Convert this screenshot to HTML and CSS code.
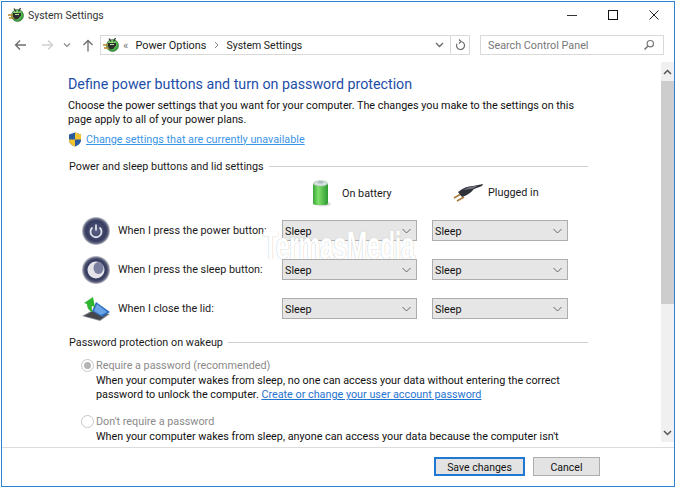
FILE: index.html
```html
<!DOCTYPE html>
<html lang="en">
<head>
<meta charset="utf-8">
<title>System Settings</title>
<link rel="stylesheet" href="styles.css">
</head>
<body>
<svg class="defs" width="0" height="0">
  <defs>
    <radialGradient id="globe" cx="0.4" cy="0.35" r="0.7"><stop offset="0" stop-color="#a8e884"/><stop offset="1" stop-color="#2a9a34"/></radialGradient>
    <linearGradient id="batt" x1="0" x2="1" y1="0" y2="0"><stop offset="0" stop-color="#3aa53a"/><stop offset="0.35" stop-color="#7fe06a"/><stop offset="1" stop-color="#2d9a33"/></linearGradient>
    <radialGradient id="knob" cx="0.5" cy="0.5" r="0.5"><stop offset="0" stop-color="#5a6088"/><stop offset="0.72" stop-color="#363b60"/><stop offset="0.86" stop-color="#595e7a"/><stop offset="1" stop-color="#c9cad0"/></radialGradient>
    <symbol id="cp" viewBox="0 0 16 16">
      <circle cx="9.500" cy="8.500" r="6" fill="url(#globe)" stroke="#2c5d2c" stroke-width=".6"/>
      <path d="M6 1.500 8 4.500M12.500 1 10.500 4.500" stroke="#333" stroke-width="1.300"/>
      <path d="M0 8h5M1 11h5" stroke="#b9862e" stroke-width="1.300"/>
      <path d="M5 6h8v2.500l-3 3.500-3 .5-2-3z" fill="#2e2e2e"/>
      <path d="M7 7.500h4" stroke="#b5e89a"/>
    </symbol>
  </defs>
</svg>
<div class="window">
  <header class="titlebar">
    <svg class="title-icon"><use href="#cp"/></svg>
    <span class="title-text">System Settings</span>
    <div class="winctrls">
      <svg width="12" height="12" viewBox="0 0 12 12"><path d="M1 6.500h10" stroke="#333" stroke-width="1"/></svg>
      <svg width="12" height="12" viewBox="0 0 12 12"><rect x="1.500" y="1.500" width="9" height="9" fill="none" stroke="#111"/></svg>
      <svg width="12" height="12" viewBox="0 0 12 12"><path d="M1.500 1.500 10.500 10.500M10.500 1.500 1.500 10.500" stroke="#222" fill="none"/></svg>
    </div>
  </header>
  <nav class="toolbar">
    <div class="navbtns">
      <svg width="13" height="12" viewBox="0 0 13 12"><path d="M12 6H1.500M6 1.500 1.500 6 6 10.500" fill="none" stroke="#6d6d6d" stroke-width="1.300"/></svg>
      <svg width="13" height="12" viewBox="0 0 13 12"><path d="M1 6h10.500M7 1.500 11.500 6 7 10.500" fill="none" stroke="#d0d0d0" stroke-width="1.300"/></svg>
      <svg width="8" height="6" viewBox="0 0 8 6"><path d="M1 1.500 4 4.500 7 1.500" fill="none" stroke="#8a8a8a" stroke-width="1.200"/></svg>
      <svg width="12" height="13" viewBox="0 0 12 13"><path d="M6 12.500V1.500M1.500 6 6 1.500 10.500 6" fill="none" stroke="#6d6d6d" stroke-width="1.300"/></svg>
    </div>
    <div class="address">
      <svg class="addr-icon"><use href="#cp"/></svg>
      <span class="crumb-sep">«</span>
      <span class="crumb crumb-first">Power Options</span>
      <svg class="crumb-arrow" width="5" height="8" viewBox="0 0 5 8"><path d="M1 1 4 4 1 7" fill="none" stroke="#888"/></svg>
      <span class="crumb">System Settings</span>
      <svg class="addr-chev" width="9" height="6" viewBox="0 0 9 6"><path d="M1 1 4.500 4.500 8 1" fill="none" stroke="#666" stroke-width="1.300"/></svg>
      <div class="refresh">
        <svg width="11" height="12" viewBox="0 0 11 12"><path d="M5.500 2.500a4 4 0 1 1-3.600 2.300M4 .5 6 2.500 4 4.500" fill="none" stroke="#6d6d6d" stroke-width="1.200"/></svg>
      </div>
    </div>
    <div class="search">
      <span>Search Control Panel</span>
      <svg width="12" height="12" viewBox="0 0 12 12"><circle cx="7.300" cy="4.700" r="3.200" fill="none" stroke="#777" stroke-width="1.200"/><path d="M5 7 1.500 10.500" stroke="#777" stroke-width="1.600"/></svg>
    </div>
  </nav>
  <div class="body">
    <main class="content">
      <h1 class="heading">Define power buttons and turn on password protection</h1>
      <p class="intro">Choose the power settings that you want for your computer. The changes you make to the settings on this page apply to all of your power plans.</p>
      <div class="change">
        <svg width="14" height="15" viewBox="0 0 14 15"><path d="M7 .5 13 2.500V8c0 3.500-3 5.500-6 6.500C4 13.500 1 11.500 1 8V2.500z" fill="#2a5a9e"/><path d="M7 .5 13 2.500V7.500H7z" fill="#f3c42f"/><path d="M7 7.500V14.500C4 13.500 1 11.500 1 8v-.5z" fill="#f3c42f"/></svg>
        <a class="link">Change settings that are currently unavailable</a>
      </div>
      <div class="group-title"><span>Power and sleep buttons and lid settings</span><i></i></div>
      <div class="col-heads">
        <div class="col-head col-battery">
          <svg width="19" height="27" viewBox="0 0 19 27"><ellipse cx="11" cy="24" rx="8" ry="2.500" fill="#ddd"/><rect x="1" y="3" width="15" height="22" rx="2.500" fill="url(#batt)"/><ellipse cx="8.500" cy="3.500" rx="7" ry="2.800" fill="#d3dfe0" stroke="#8bb08b" stroke-width=".5"/><rect x="6" y="1" width="5" height="2.500" rx="1" fill="#aebcc0"/></svg>
          <span>On battery</span>
        </div>
        <div class="col-head col-plug">
          <svg width="30" height="19" viewBox="0 0 30 19"><path d="M1 15 8 11M4 18 11 14" stroke="#a87a3a" stroke-width="1.500"/><path d="M5 9Q12 3 20 3L30 1 29 3 21 6Q16 12 9 14z" fill="#2f3238"/><path d="M10 7Q14 4 20 3.500L25 2.500 20 5.500Q15 6 10 7z" fill="#767a82"/></svg>
          <span>Plugged in</span>
        </div>
      </div>
      <div class="grid">
        <svg class="row-icon" width="30" height="30" viewBox="0 0 30 30"><circle cx="15" cy="15" r="14" fill="url(#knob)"/><path d="M11.500 11.500a5.500 5.500 0 1 0 7 0" fill="none" stroke="#dfe0e8" stroke-width="1.800"/><path d="M15 8.500v6" stroke="#dfe0e8" stroke-width="1.800"/></svg>
        <span class="row-label">When I press the power button:</span>
        <div class="dropdown"><span>Sleep</span><svg width="9" height="6" viewBox="0 0 9 6"><path d="M.5 1 4.500 5 8.500 1" fill="none" stroke="#666"/></svg></div>
        <div class="dropdown"><span>Sleep</span><svg width="9" height="6" viewBox="0 0 9 6"><path d="M.5 1 4.500 5 8.500 1" fill="none" stroke="#666"/></svg></div>

        <svg class="row-icon" width="30" height="30" viewBox="0 0 30 30"><circle cx="15" cy="15" r="14" fill="url(#knob)"/><circle cx="15" cy="15" r="8.500" fill="#e4e4ea"/><ellipse cx="17.500" cy="13" rx="5" ry="6" fill="#7c80a0"/></svg>
        <span class="row-label">When I press the sleep button:</span>
        <div class="dropdown"><span>Sleep</span><svg width="9" height="6" viewBox="0 0 9 6"><path d="M.5 1 4.500 5 8.500 1" fill="none" stroke="#666"/></svg></div>
        <div class="dropdown"><span>Sleep</span><svg width="9" height="6" viewBox="0 0 9 6"><path d="M.5 1 4.500 5 8.500 1" fill="none" stroke="#666"/></svg></div>

        <svg class="row-icon" width="30" height="27" viewBox="0 0 30 27"><path d="M1 21 19 26 29 19 12 15z" fill="#8a8f96"/><path d="M3 21 19 25 27 19 12 16z" fill="#45474c"/><path d="M11 16 15 7 29 17 21 22z" fill="#2f6fc0"/><path d="M13 16 16 9 26 17 20 20z" fill="#6aa4e6"/><path d="M12 2 3 8l3 1c0 4 2 7 6 8 0 0-2-3-1-6l3 1z" fill="#2fb52f"/></svg>
        <span class="row-label">When I close the lid:</span>
        <div class="dropdown"><span>Sleep</span><svg width="9" height="6" viewBox="0 0 9 6"><path d="M.5 1 4.500 5 8.500 1" fill="none" stroke="#666"/></svg></div>
        <div class="dropdown"><span>Sleep</span><svg width="9" height="6" viewBox="0 0 9 6"><path d="M.5 1 4.500 5 8.500 1" fill="none" stroke="#666"/></svg></div>
      </div>
      <div class="group-title group-pw"><span>Password protection on wakeup</span><i></i></div>
      <div class="option">
        <span class="radio checked"></span>
        <span class="opt-label">Require a password (recommended)</span>
        <p class="opt-text">When your computer wakes from sleep, no one can access your data without entering the correct password to unlock the computer. <a class="link-inline">Create or change your user account password</a></p>
      </div>
      <div class="option option-2">
        <span class="radio"></span>
        <span class="opt-label">Don't require a password</span>
        <p class="opt-text">When your computer wakes from sleep, anyone can access your data because the computer isn't</p>
      </div>
      <div class="watermark">TermasMedia</div>
    </main>
    <aside class="scrollbar">
      <div class="sb-btn"><svg width="9" height="6" viewBox="0 0 9 6"><path d="M1 5 4.500 1.500 8 5" fill="none" stroke="#555" stroke-width="1.500"/></svg></div>
      <div class="sb-thumb"></div>
      <div class="sb-track"></div>
      <div class="sb-btn"><svg width="9" height="6" viewBox="0 0 9 6"><path d="M1 1 4.500 4.500 8 1" fill="none" stroke="#555" stroke-width="1.500"/></svg></div>
    </aside>
  </div>
  <footer class="footer">
    <button class="btn btn-default">Save changes</button>
    <button class="btn">Cancel</button>
  </footer>
</div>
</body>
</html>
```
FILE: styles.css
```css
* { box-sizing: border-box; }
html, body { margin: 0; padding: 0; background: #fff; }
body { width: 677px; height: 489px; overflow: hidden; font-family: Roboto, "Liberation Sans", sans-serif; font-size: 10.800px; color: #1a1a1a; }
.defs { position: absolute; }
.window { margin: 1px 0 0 1px; width: 674px; height: 486px; border: 1px solid #2b84cf; display: flex; flex-direction: column; background: #fff; overflow: hidden; }
.titlebar { height: 26px; flex: none; display: flex; align-items: center; padding-left: 6px; }
.title-icon { width: 16px; height: 16px; }
.title-text { margin-left: 4px; font-size: 10.500px; color: #333; }
.winctrls { margin-left: auto; display: flex; gap: 29px; padding-right: 14px; align-items: center; }
.toolbar { height: 20px; margin-top: 7px; flex: none; display: flex; align-items: stretch; }
.navbtns { width: 98px; display: flex; align-items: center; padding-left: 12px; }
.navbtns svg:nth-child(2) { margin-left: 14px; }
.navbtns svg:nth-child(3) { margin-left: 9px; }
.navbtns svg:nth-child(4) { margin-left: 11px; }
.address { width: 370px; border: 1px solid #d9d9d9; display: flex; align-items: center; padding-left: 2px; }
.addr-icon { width: 16px; height: 16px; }
.crumb-sep { margin-left: 4px; color: #777; font-size: 11.500px; }
.crumb { color: #222; font-size: 10.500px; margin-left: 8px; }
.crumb-first { margin-left: 7px; font-size: 10.900px; }
.crumb-arrow { margin-left: 8px; margin-right: -1px; }
.addr-chev { margin-left: auto; margin-right: 6px; }
.refresh { width: 19px; height: 100%; border-left: 1px solid #d9d9d9; display: flex; align-items: center; justify-content: center; }
.search { width: 184px; margin-left: 10px; border: 1px solid #d9d9d9; display: flex; align-items: center; justify-content: space-between; padding: 0 8px 0 7px; color: #777; }
.body { flex: 1; min-height: 0; display: flex; margin-top: 6px; }
.content { position: relative; flex: 1; min-width: 0; overflow: hidden; padding-left: 66px; }
.heading { margin: 13px 0 0; font-size: 14.250px; font-weight: 400; color: #1d4fa8; line-height: 20px; }
.intro { margin: 5px 0 0; width: 520px; line-height: 14px; color: #111; }
.change { display: flex; align-items: center; gap: 4px; margin-top: 4px; height: 16px; }
.link { color: #3b95e6; text-decoration: underline; }
.group-title { display: flex; align-items: center; gap: 5px; margin: 11px 0 0 1px; width: 519px; height: 16px; white-space: nowrap; }
.group-title i { flex: 1; height: 1px; background: #d0d0d0; }
.col-heads { display: flex; height: 27px; margin: 6px 0 0 244px; }
.col-head { display: flex; align-items: center; }
.col-battery { width: 141px; gap: 11px; }
.col-plug { gap: 5px; margin-top: -2px; }
.grid { display: grid; grid-template-columns: 29px 171px 135px 151px; grid-auto-rows: 21px; row-gap: 18px; margin: 13px 0 0 14px; align-items: center; }
.row-icon { align-self: center; margin-left: -1px; }
.row-label { margin-left: 7px; white-space: nowrap; }
.dropdown { height: 21px; border: 1px solid #adadad; background: #e6e6e6; display: flex; align-items: center; justify-content: space-between; padding: 1px 5px 0 2px; color: #111; }
.dropdown + .dropdown { margin-left: 15px; }
.group-pw { margin-top: 15px; }
.option { position: relative; margin: 8px 0 0 28px; width: 492px; }
.option-2 { margin-top: 12px; }
.radio { position: absolute; left: -15px; top: 1px; width: 13px; height: 13px; border-radius: 50%; border: 1px solid #c8c8c8; background: #fff; }
.radio.checked::after { content: ""; position: absolute; inset: 2px; border-radius: 50%; background: #b5b5b5; }
.opt-label { display: block; color: #8a8a8a; line-height: 16px; }
.opt-text { margin: 0; line-height: 14px; color: #111; }
.link-inline { color: #1f73d1; text-decoration: underline; }
.watermark { position: absolute; left: 261px; top: 164px; font-family: "Liberation Sans", sans-serif; font-size: 38px; font-weight: 700; color: #fff; letter-spacing: -1px; transform: scaleX(.66); transform-origin: left top; text-shadow: 0 0 1px #b0b0b0; white-space: nowrap; }
.scrollbar { width: 13px; flex: none; display: flex; flex-direction: column; background: #f0f0f0; margin-top: 1px; }
.sb-btn { height: 19px; display: flex; align-items: center; justify-content: center; flex: none; }
.sb-thumb { height: 223px; background: #cdcdcd; flex: none; }
.sb-track { flex: 1; }
.footer { height: 39px; flex: none; border-top: 1px solid #dcdcdc; display: flex; justify-content: flex-end; gap: 8px; padding: 9px 74px 0 0; margin-top: 5px; }
.btn { width: 67px; height: 19px; padding: 1px 0 0; border: 1px solid #adadad; background: #e3e3e3; font-family: inherit; font-size: 10.500px; color: #111; }
.btn-default { width: 91px; border: 2px solid #1f78d1; }
```
